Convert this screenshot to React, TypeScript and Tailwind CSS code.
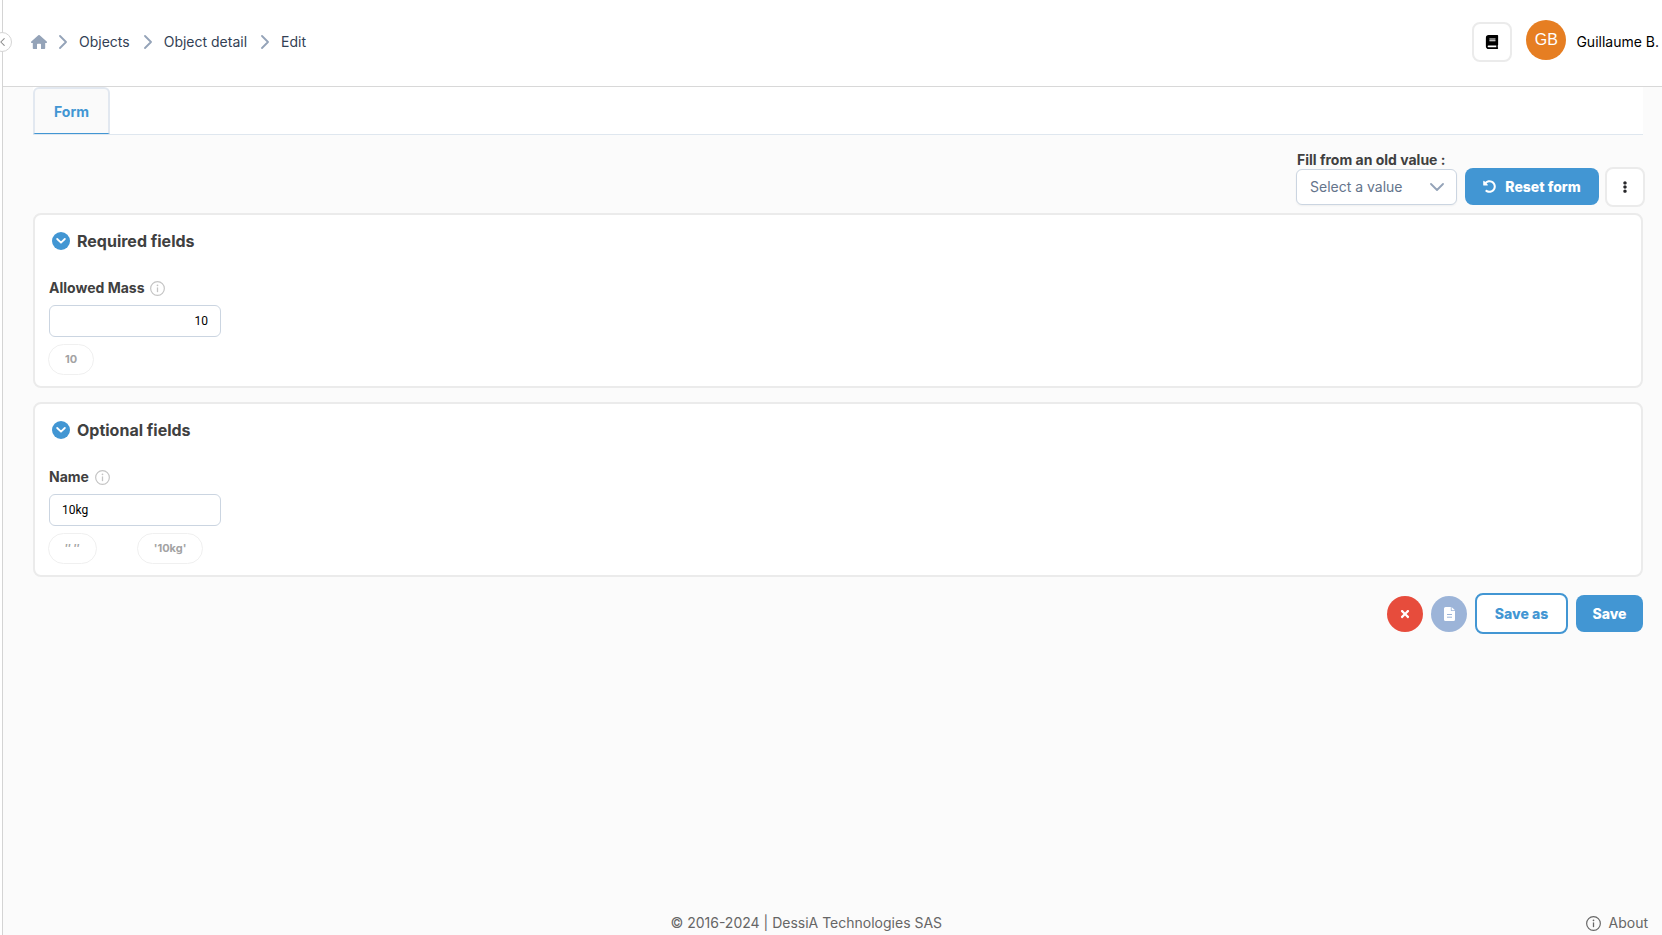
import { useState, type ReactNode } from 'react';
import { FaBook, FaUndoAlt, FaTimes, FaEllipsisV } from 'react-icons/fa';

function Chevron({ className }: { className: string }) {
  return (
    <svg viewBox="0 0 8 14" className={className} fill="none" stroke="currentColor" strokeWidth="1.8" aria-hidden="true">
      <path d="M1 1l6 6-6 6" strokeLinecap="round" strokeLinejoin="round" />
    </svg>
  );
}

function HomeIcon({ className }: { className: string }) {
  return (
    <svg viewBox="0 0 16 14" className={className} fill="currentColor" aria-hidden="true">
      <path d="M7.3.3a1 1 0 0 1 1.4 0l7 6.3a.8.8 0 0 1-.5 1.4h-1v5.200a.8.8 0 0 1-.8.8H10V9.600a.8.8 0 0 0-.8-.8H6.800a.8.8 0 0 0-.8.8V14H2.600a.8.8 0 0 1-.8-.8V8h-1a.8.8 0 0 1-.5-1.400z" />
    </svg>
  );
}

function FileIcon({ className }: { className: string }) {
  return (
    <svg viewBox="0 0 11 14" className={className} aria-hidden="true">
      <path d="M1.500 0H6.800v3.200a.9.9 0 0 0 .9.9H11v8.400A1.500 1.500 0 0 1 9.500 14h-8A1.500 1.500 0 0 1 0 12.500v-11A1.500 1.500 0 0 1 1.500 0z" fill="currentColor" />
      <path d="M7.600 0L11 3.300H7.600z" fill="currentColor" />
      <path d="M3 7.500h5M3 10.200h5" stroke="#9cb4d8" strokeWidth="1" />
    </svg>
  );
}

function InfoIcon({ className }: { className: string }) {
  return (
    <svg viewBox="0 0 14 14" className={className} fill="none" stroke="currentColor" aria-hidden="true">
      <circle cx="7" cy="7" r="6.4" strokeWidth="1.1" />
      <path d="M7 6v4.4" strokeWidth="1.2" />
      <circle cx="7" cy="4" r="0.8" fill="currentColor" stroke="none" />
    </svg>
  );
}

function Crumb({ children }: { children: ReactNode }) {
  return (
    <li className="flex items-center gap-3 pr-[2px]">
      <Chevron className="h-[14px] w-2 text-[#94a3b8]" />
      <a href="#" className="text-[#334155]">{children}</a>
    </li>
  );
}

function Chip({ children, onClick }: { children: ReactNode; onClick: () => void }) {
  return (
    <button
      type="button"
      onClick={onClick}
      className="h-[31px] rounded-full border border-[#f0f0f0] bg-white px-4 text-[11px] font-bold text-[#a3a3a3]"
    >
      {children}
    </button>
  );
}

function Section({ title, children }: { title: string; children: ReactNode }) {
  return (
    <section className="rounded-lg border-2 border-[#ebebeb] bg-white px-[14px] pt-[14px] pb-[11px]">
      <h2 className="flex h-6 items-center gap-[7px] pl-[3px] text-base font-bold text-[#404040]">
        <button
          type="button"
          aria-label={title}
          className="flex size-[18px] items-center justify-center rounded-full bg-[#4296d3] text-white"
        >
          <svg viewBox="0 0 10 6" className="h-[6px] w-[10px]" fill="none" stroke="currentColor" strokeWidth="1.8" aria-hidden="true">
            <path d="M1.2 1L5 4.7 8.8 1" strokeLinecap="round" strokeLinejoin="round" />
          </svg>
        </button>
        {title}
      </h2>
      <div className="mt-[25px]">{children}</div>
    </section>
  );
}

function FieldLabel({ id, children }: { id: string; children: ReactNode }) {
  return (
    <label htmlFor={id} className="flex h-5 items-center gap-[6px] text-sm font-bold text-[#404040]">
      {children}
      <InfoIcon className="size-[15px] text-[#c4c4c4]" />
    </label>
  );
}

const inputClass =
  "mt-[7px] block h-8 w-[172px] rounded-md border border-[#cbd5e1] bg-white px-3 font-['Roboto','Liberation_Sans',sans-serif] text-[12px] text-black";

export default function App() {
  const [mass, setMass] = useState('10');
  const [name, setName] = useState('10kg');

  return (
    <div className="flex min-h-screen bg-[#fbfbfb] font-['Inter','Liberation_Sans',sans-serif] text-sm">
      <aside className="relative w-[3px] shrink-0 border-r border-[#d4d4d4] bg-white">
        <button
          type="button"
          aria-label="Toggle sidebar"
          className="absolute top-8 -left-2 flex size-5 items-center justify-center rounded-full border border-[#d4d4d4] bg-white text-[#8a8a8a]"
        >
          <Chevron className="h-2 w-[5px] rotate-180" />
        </button>
      </aside>

      <div className="flex min-w-0 flex-1 flex-col">
        <header className="flex h-[87px] items-center justify-between border-b border-[#d8d8d8] bg-white pl-7">
          <nav aria-label="Breadcrumb" className="-mt-[2px]">
            <ol className="flex items-center gap-3">
              <li>
                <a href="#" aria-label="Home" className="block text-[#94a3b8]">
                  <HomeIcon className="h-[14px] w-4" />
                </a>
              </li>
              <Crumb>Objects</Crumb>
              <Crumb>Object detail</Crumb>
              <Crumb>Edit</Crumb>
            </ol>
          </nav>
          <div className="-mt-[2px] flex items-center">
            <button
              type="button"
              aria-label="Documentation"
              className="flex size-10 items-center justify-center rounded-lg border-2 border-[#ebebeb] bg-white text-black"
            >
              <FaBook className="size-[14px]" />
            </button>
            <div className="mb-1 ml-[14px] flex size-10 items-center justify-center rounded-full bg-[#e67e22] font-['Liberation_Sans',sans-serif] text-base text-white">
              GB
            </div>
            <span className="ml-[10px] pr-[3px] whitespace-nowrap text-black">Guillaume B.</span>
          </div>
        </header>

        <main className="flex-1 pr-[19px] pl-[30px]">
          <div role="tablist" className="flex h-12 border-b border-[#dfe7ef] bg-white">
            <button
              type="button"
              role="tab"
              aria-selected="true"
              className="h-[47px] rounded-t-md border-2 border-b border-[#e2e8f0] border-b-[#4296d3] bg-[#fafafa] px-[19px] pt-[2px] font-bold text-[#4296d3]"
            >
              Form
            </button>
          </div>

          <div className="mt-4 flex items-end justify-end">
            <div className="flex flex-col pb-[2px]">
              <label htmlFor="old-value" className="h-[18px] pl-px leading-[18px] font-bold text-[#404040]">
                Fill from an old value :
              </label>
              <div className="relative w-[161px]">
                <select
                  id="old-value"
                  defaultValue=""
                  className="h-9 w-full appearance-none rounded-md border border-[#cbd5e1] bg-white px-[13px] text-[#64748b] shadow-xs"
                >
                  <option value="">Select a value</option>
                </select>
                <Chevron className="pointer-events-none absolute top-[11px] right-4 h-[14px] w-2 rotate-90 text-[#94a3b8]" />
              </div>
            </div>
            <button
              type="button"
              onClick={() => {
                setMass('10');
                setName('10kg');
              }}
              className="mb-[2px] ml-2 flex h-[37px] w-[134px] items-center justify-center gap-[9px] rounded-lg bg-[#4296d3] font-extrabold text-white"
            >
              <FaUndoAlt className="size-[13px]" />
              Reset form
            </button>
            <button
              type="button"
              aria-label="More actions"
              className="-mr-[2px] ml-[6px] flex size-10 items-center justify-center rounded-lg border-2 border-[#ebebeb] bg-white text-[#27272a]"
            >
              <FaEllipsisV className="size-3" />
            </button>
          </div>

          <div className="mt-[6px] flex flex-col gap-[14px]">
            <Section title="Required fields">
              <FieldLabel id="mass">Allowed Mass</FieldLabel>
              <input id="mass" className={inputClass + ' text-right'} value={mass} onChange={(e) => setMass(e.target.value)} />
              <div className="-ml-px mt-[7px] flex">
                <Chip onClick={() => setMass('10')}>10</Chip>
              </div>
            </Section>
            <Section title="Optional fields">
              <FieldLabel id="name">Name</FieldLabel>
              <input id="name" className={inputClass} value={name} onChange={(e) => setName(e.target.value)} />
              <div className="-ml-px mt-[7px] flex gap-10">
                <Chip onClick={() => setName('')}>″ ″</Chip>
                <Chip onClick={() => setName('10kg')}>'10kg'</Chip>
              </div>
            </Section>
          </div>

          <div className="mt-4 flex items-center justify-end gap-2">
            <button
              type="button"
              aria-label="Cancel"
              className="flex size-9 items-center justify-center rounded-full bg-[#e74c3c] text-white"
            >
              <FaTimes className="size-3" />
            </button>
            <button
              type="button"
              aria-label="Save draft"
              className="flex size-9 items-center justify-center rounded-full bg-[#9cb4d8] text-white"
            >
              <FileIcon className="h-[14px] w-[11px]" />
            </button>
            <button
              type="button"
              className="h-[41px] w-[93px] rounded-lg border-2 border-[#4296d3] bg-white font-extrabold text-[#4296d3]"
            >
              Save as
            </button>
            <button type="button" className="h-[37px] w-[67px] rounded-lg bg-[#4296d3] font-extrabold text-white">
              Save
            </button>
          </div>
        </main>

        <footer className="flex items-center pr-[14px] pb-[2px] pl-6 text-[#666666]">
          <p className="flex-1 text-center">© 2016-2024 | DessiA Technologies SAS</p>
          <a href="#" className="flex items-center gap-2">
            <InfoIcon className="size-[15px]" />
            About
          </a>
        </footer>
      </div>
    </div>
  );
}
